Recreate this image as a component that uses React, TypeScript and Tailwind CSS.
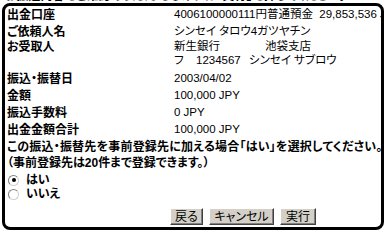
import React from 'react'

const rows = [
  { label: '振込・振替日', value: '2003/04/02' },
  { label: '金額', value: '100,000 JPY' },
  { label: '振込手数料', value: '0 JPY' },
  { label: '出金金額合計', value: '100,000 JPY' }
]

const Btn = ({ label, w }: { label: string; w: string }) => (
  <button
    className={`${w} h-[17px] bg-[#d4d0c8] border border-t-white border-l-white border-r-[#404040] border-b-[#404040] shadow-[inset_-1px_-1px_0_#808080] text-[12px] leading-none text-black flex items-center justify-center`}
  >
    {label}
  </button>
)

const Radio = ({ checked, label }: { checked?: boolean; label: string }) => (
  <div className="h-[14px] flex items-center">
    <div className="ml-[1px] w-[11px] h-[11px] rounded-full border border-t-[#808080] border-l-[#808080] border-r-[#d4d0c8] border-b-[#d4d0c8] bg-white flex items-center justify-center">
      {checked && <div className="w-[4px] h-[4px] rounded-full bg-black" />}
    </div>
    <span className="ml-[7px] font-bold text-[12px]">{label}</span>
  </div>
)

export default function App() {
  return (
    <div className="w-[386px] h-[232px] bg-white text-black overflow-hidden font-['Liberation_Sans','Noto_Sans_CJK_JP',sans-serif] [font-feature-settings:'palt']">
      {/* cut-off heading above the frame */}
      <div className="h-[3px] overflow-hidden pl-[5px]">
        <div className="-mt-[10px] text-[12px] leading-[13px] font-bold whitespace-nowrap">
          お振込内容をご確認のうえ、よろしければ「実行」を押してください。
        </div>
      </div>

      <div className="mx-[2px] h-[227px] border-[3px] border-black rounded-[8px] pl-[2px] overflow-hidden">
        <div className="flex h-[17px] items-center">
          <div className="w-[167px] shrink-0 font-bold text-[12px]">出金口座</div>
          <div className="text-[11.5px] whitespace-nowrap">
            4006100000111円普通預金&nbsp;&nbsp;29,853,536 JPY
          </div>
        </div>
        <div className="flex h-[17px] items-center">
          <div className="w-[167px] shrink-0 font-bold text-[12px]">ご依頼人名</div>
          <div className="text-[11.5px] whitespace-nowrap">シンセイ タロウ4ガツヤチン</div>
        </div>
        <div className="flex h-[30px]">
          <div className="w-[167px] shrink-0 font-bold text-[12px] h-[14px] flex items-center">お受取人</div>
          <div className="text-[11.5px] whitespace-nowrap">
            <div className="h-[14px] flex items-center">
              <span className="w-[91px]">新生銀行</span>
              <span>池袋支店</span>
            </div>
            <div className="h-[14px] flex items-center">
              <span className="w-[22px]">フ</span>
              <span className="w-[53px]">1234567</span>
              <span>シンセイ サブロウ</span>
            </div>
          </div>
        </div>
        {rows.map(r => (
          <div key={r.label} className="flex h-[17px] items-center">
            <div className="w-[167px] shrink-0 font-bold text-[12px]">{r.label}</div>
            <div className="text-[11.5px] whitespace-nowrap">{r.value}</div>
          </div>
        ))}
        <div className="h-[17px] flex items-center font-bold text-[12px] tracking-[0.2px] whitespace-nowrap">
          この振込・振替先を事前登録先に加える場合「はい」を選択してください。
        </div>
        <div className="h-[16px] flex items-center font-bold text-[12px] whitespace-nowrap">
          （事前登録先は20件まで登録できます。）
        </div>
        <div className="mt-[2px]">
          <Radio checked label="はい" />
          <Radio label="いいえ" />
        </div>
        <div className="mt-[7px] flex pl-[163px] gap-[6px]">
          <Btn label="戻る" w="w-[33px]" />
          <Btn label="キャンセル" w="w-[65px]" />
          <Btn label="実行" w="w-[36px]" />
        </div>
      </div>
    </div>
  )
}
